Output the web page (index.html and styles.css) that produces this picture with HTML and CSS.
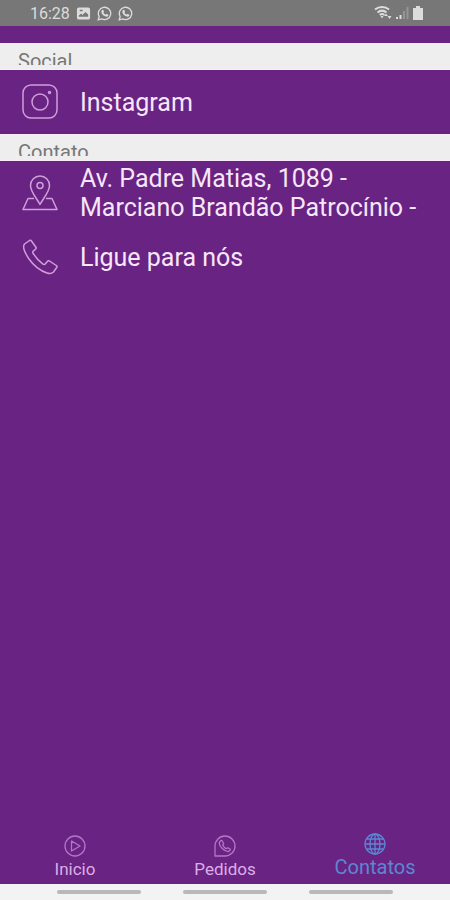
FILE: index.html
```
<!DOCTYPE html>
<html lang="pt-BR">
<head>
  <meta charset="UTF-8">
  <meta name="viewport" content="width=device-width, initial-scale=1.0">
  <title>Contatos</title>
  <link rel="stylesheet" href="styles.css">
</head>
<body>
  <header class="status-bar">
    <span class="clock">16:28</span>
    <svg class="status-icon" viewBox="0 0 16 16">
      <path fill="currentColor" fill-rule="evenodd" d="M3 1.500h10a2 2 0 0 1 2 2v9a2 2 0 0 1-2 2H3a2 2 0 0 1-2-2v-9a2 2 0 0 1 2-2zM3 11.500h10V9l-3-2.500-3 3L5.500 8 3 10zM4 4v1.500h3V4z"/>
    </svg>
    <svg class="status-icon" viewBox="0 0 16 16">
      <path fill="none" stroke="currentColor" stroke-width="1.400" d="M1.300 14.700l1-3.500A6.600 6.600 0 1 1 5 13.800z"/>
      <path fill="currentColor" d="M5.300 4.200l1.300-.2 1 2-.8 1c.5 1 1.300 1.700 2.300 2.200l1-.9 2 1-.2 1.400c-.8.900-2 .9-3.300.3-1.900-.8-3.400-2.500-3.900-4.200-.2-1 0-1.900.6-2.600z"/>
    </svg>
    <svg class="status-icon" viewBox="0 0 16 16">
      <path fill="none" stroke="currentColor" stroke-width="1.400" d="M1.300 14.700l1-3.500A6.600 6.600 0 1 1 5 13.800z"/>
      <path fill="currentColor" d="M5.300 4.200l1.300-.2 1 2-.8 1c.5 1 1.300 1.700 2.300 2.200l1-.9 2 1-.2 1.400c-.8.900-2 .9-3.300.3-1.900-.8-3.400-2.500-3.900-4.200-.2-1 0-1.900.6-2.600z"/>
    </svg>
    <span class="status-right">
      <svg class="wifi-icon" viewBox="0 0 18 16">
        <g fill="none" stroke="currentColor" stroke-width="2">
          <path d="M1 4.500C5 1 11 1 15 4.500"/>
          <path d="M3.500 7.500c3-2.500 6-2.500 9 0"/>
          <path d="M5.800 10c1.600-1.300 2.900-1.300 4.500 0"/>
        </g>
        <path fill="currentColor" d="M6.500 11L8 13.500 9.500 11zM10 11l2-2.500 2 2.500zM13.500 11h4l-2 3z"/>
      </svg>
      <svg class="signal-icon" viewBox="0 0 13 14">
        <path fill="currentColor" d="M0 11h2v2H0zM3.500 9h2v4h-2z"/>
        <path fill="currentColor" opacity=".3" d="M7 5h2v8H7zM10.500 1h2v12h-2z"/>
      </svg>
      <svg class="battery-icon" viewBox="0 0 10 14">
        <path fill="currentColor" d="M3 0h4v2h3v12H0V2h3z"/>
      </svg>
    </span>
  </header>

  <main class="content">
    <h2 class="section-title"><span>Social</span></h2>
    <a class="item" href="#instagram">
      <svg class="item-icon" viewBox="0 0 36 36">
        <rect x="1" y="1" width="34" height="33" rx="8"/>
        <circle cx="18" cy="18" r="8"/>
        <circle cx="27.500" cy="8.500" r="1"/>
      </svg>
      <span class="item-text">Instagram</span>
    </a>
    <h2 class="section-title"><span>Contato</span></h2>
    <a class="item" href="#endereco">
      <svg class="item-icon" viewBox="0 0 36 36">
        <path d="M18 29.500C15 23.500 8.500 17 8.500 10.500a9.500 9.500 0 0 1 19 0c0 6.500-6.500 13-9.500 19z"/>
        <circle cx="18" cy="10.500" r="3"/>
        <path d="M12 23.500H6L1 34.500h34l-5-11h-6"/>
      </svg>
      <span class="item-text">Av. Padre Matias, 1089 - Marciano Brandão Patrocínio -</span>
    </a>
    <a class="item" href="#telefone">
      <svg class="item-icon" viewBox="0 0 36 36">
        <path d="M7.500 1.500L2.500 5C0 8 3 14 7 20c5 7 12 12 18 14 3 1 5 .5 6.500-1l3.200-4.500c.5-.8.300-1.500-.5-2L27.500 22c-.8-.5-1.600-.3-2 .3l-2 2.400c-.8.900-1.800.9-2.800.2-4-3-7-6.400-9.500-10.400-.6-1-.5-2 .3-2.600l2-1.700c.7-.6.800-1.300.4-2L9.500 2c-.5-.8-1.200-1-2-.5z"/>
      </svg>
      <span class="item-text">Ligue para nós</span>
    </a>
  </main>

  <nav class="tab-bar">
    <a class="tab" href="#inicio">
      <svg class="tab-icon" viewBox="0 0 22 22">
        <circle cx="11" cy="11" r="10"/>
        <path d="M7.500 6v10l8.500-5z"/>
      </svg>
      Inicio
    </a>
    <a class="tab" href="#pedidos">
      <svg class="tab-icon" viewBox="0 0 22 22">
        <path d="M1 21V11a10 10 0 1 1 10 10z"/>
        <path d="M7 5.500L5.500 7c-.6 2 .8 4.500 2.800 6.500s4.200 3.300 6.200 3l1.700-1.500c.3-.4.200-.8-.2-1l-2.200-1.300-1.500 1c-1.500-.8-2.800-2-3.600-3.500l1-1.500L8 5.500z"/>
      </svg>
      Pedidos
    </a>
    <a class="tab active" href="#contatos" aria-current="page">
      <svg class="tab-icon" viewBox="0 0 22 22">
        <circle cx="11" cy="11" r="10"/>
        <ellipse cx="11" cy="11" rx="5" ry="10"/>
        <path d="M11 1v20M1 11h20M2.500 6h17M2.500 16h17"/>
      </svg>
      Contatos
    </a>
  </nav>

  <div class="system-bar">
    <span></span>
    <span></span>
    <span></span>
  </div>
</body>
</html>
```

FILE: styles.css
```
* {
  box-sizing: border-box;
}

body {
  margin: 0;
  min-height: 100vh;
  display: flex;
  flex-direction: column;
  background-color: #682383;
  color: #f8e6fb;
  font-family: Roboto, sans-serif;
}

a {
  color: inherit;
  text-decoration: none;
}

.status-bar {
  display: flex;
  align-items: center;
  gap: 6px;
  height: 26px;
  padding: 0 27px 0 30px;
  background-color: #777;
  color: #dcdcdc;
}

.clock {
  font-size: 16px;
}

.status-icon {
  width: 15px;
  height: 15px;
}

.status-right {
  display: flex;
  align-items: center;
  gap: 4px;
  margin-left: auto;
}

.wifi-icon {
  width: 18px;
  height: 16px;
}

.signal-icon {
  width: 13px;
  height: 14px;
}

.battery-icon {
  width: 10px;
  height: 14px;
}

.content {
  flex: 1;
  padding-top: 17px;
}

.section-title {
  height: 27px;
  margin: 0;
  padding: 7px 18px 0;
  background-color: #eee;
  border-top: 1px solid #fbeafd;
  border-bottom: 1px solid #fbeafd;
  color: #777;
  font-size: 20px;
  font-weight: 400;
  line-height: 20px;
}

/* the title row is shorter than its text */
.section-title span {
  display: block;
  height: 14px;
  overflow: hidden;
}

.item {
  display: flex;
  align-items: center;
  gap: 22px;
  min-height: 64px;
  padding: 0 22px;
}

.item-icon {
  flex: none;
  width: 36px;
  height: 36px;
  fill: none;
  stroke: #cf9edb;
  stroke-width: 1.5;
  stroke-linejoin: round;
}

.item-text {
  font-size: 25px;
  line-height: 29px;
}

.tab-bar {
  display: flex;
  height: 64px;
}

.tab {
  flex: 1;
  display: flex;
  flex-direction: column;
  align-items: center;
  justify-content: flex-end;
  gap: 2px;
  padding-bottom: 5px;
  color: #dcaee6;
  font-size: 17px;
  line-height: 20px;
}

.tab-icon {
  width: 22px;
  height: 22px;
  fill: none;
  stroke: #b576c8;
  stroke-width: 1.3;
  stroke-linejoin: round;
}

.tab.active {
  gap: 0;
  color: #5c87d2;
  font-size: 20px;
  line-height: 24px;
}

.active .tab-icon {
  stroke: #5c87d2;
}

.system-bar {
  display: flex;
  justify-content: center;
  gap: 42px;
  height: 16px;
  padding: 6px 57px 0;
  background-color: #f3f3f3;
}

.system-bar span {
  flex: 1;
  height: 4px;
  border-radius: 2px;
  background-color: #b9b9b9;
}
```
